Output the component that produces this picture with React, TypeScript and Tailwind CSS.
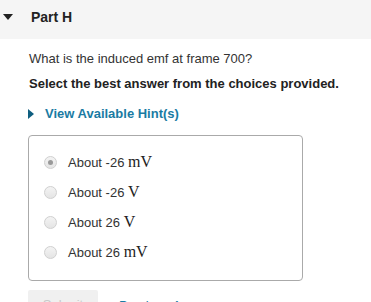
import React from "react";

const options: { pre: string; unit: string; checked: boolean }[] = [
  { pre: "About -26", unit: "mV", checked: true },
  { pre: "About -26", unit: "V", checked: false },
  { pre: "About 26", unit: "V", checked: false },
  { pre: "About 26", unit: "mV", checked: false },
];

export default function App() {
  return (
    <div className="w-[371px] h-[302px] overflow-hidden bg-white text-[#333] font-['Liberation_Sans',Arial,sans-serif]">
      <div className="relative h-[39px] bg-[#f5f5f5] pl-[31px] pt-[9px]">
        <svg className="absolute left-[3px] top-[14px]" width="10" height="6" viewBox="0 0 10 6">
          <polygon points="0,0 10,0 5,6" fill="#222" />
        </svg>
        <div className="text-[14px] leading-[16px] font-bold text-[#222]">Part H</div>
      </div>
      <div className="pl-[28px]">
        <div className="mt-[12px] pl-[1px] text-[13px] leading-[16px]">What is the induced emf at frame 700?</div>
        <div className="mt-[9px] pl-[1px] text-[13px] leading-[16px] font-bold text-[#222]">
          Select the best answer from the choices provided.
        </div>
        <div className="mt-[14px] flex items-center h-[16px]">
          <svg width="6" height="10" viewBox="0 0 6 10" className="mr-[11px]">
            <polygon points="0,0 6,5 0,10" fill="#0f5f80" />
          </svg>
          <span className="text-[13px] leading-[16px] font-bold text-[#1a7ba3]">View Available Hint(s)</span>
        </div>
        <div className="mt-[13px] w-[275px] h-[146px] border border-[#aaa] rounded-[4px] pl-[15px] pt-[11px]">
          {options.map((o, i) => (
            <div key={i} className="h-[30px] flex items-center">
              <span className="w-[13px] h-[13px] rounded-full border border-[#d0d0d0] bg-gradient-to-b from-[#f4f4f4] to-[#e4e4e4] flex items-center justify-center">
                {o.checked && <span className="w-[5px] h-[5px] rounded-full bg-[#999]" />}
              </span>
              <span className="ml-[11px] text-[13px] leading-[16px]">
                {o.pre}{" "}
                <span className="font-['Liberation_Serif',serif] text-[16px] text-[#222]">{o.unit}</span>
              </span>
            </div>
          ))}
        </div>
        <div className="mt-[9px] flex items-start">
          <div className="w-[70px] h-[30px] bg-[#f0f0f0] rounded-[2px] text-[13px] text-[#c9c9c9] flex items-center justify-center">
            Submit
          </div>
          <div className="ml-[21px] pt-[8px] text-[13px] leading-[16px] text-[#1a7ba3]">Previous Answers</div>
        </div>
      </div>
    </div>
  );
}
